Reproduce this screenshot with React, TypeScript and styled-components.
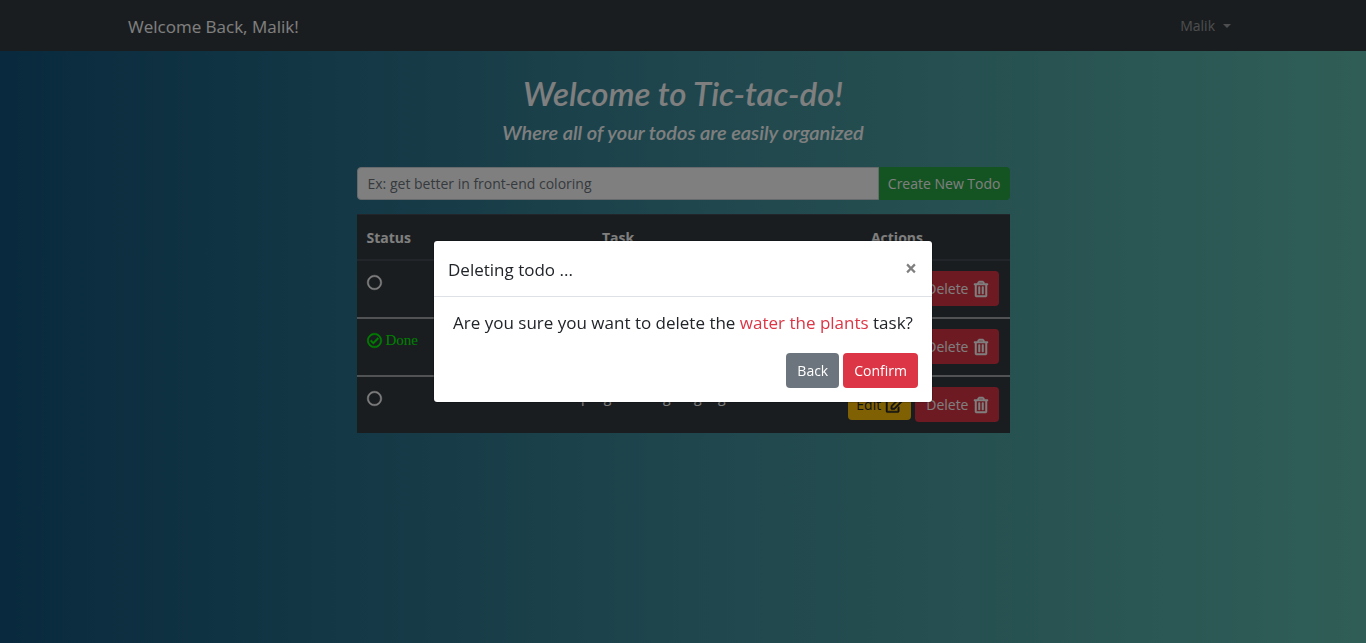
import React from "react";
import styled, { createGlobalStyle, css } from "styled-components";
import { FaRegCheckCircle, FaRegCircle, FaRegEdit, FaRegTrashAlt } from "react-icons/fa";

const GlobalStyle = createGlobalStyle`
  *, *::before, *::after { box-sizing: border-box; }
  body {
    margin: 0;
    min-height: 100vh;
    background: linear-gradient(to right, #12547c, #3e8c9a 50%, #60bdae);
    font-family: "Open Sans", "Noto Sans", sans-serif;
    font-size: 14px;
    line-height: 21px;
    color: #212529;
  }
`;

const Navbar = styled.header`
  height: 51px;
  background: #343a40;
`;

const NavInner = styled.div`
  max-width: 1140px;
  height: 100%;
  margin: 0 auto;
  padding: 0 15px;
  display: flex;
  align-items: center;
  justify-content: space-between;
`;

const Brand = styled.a`
  padding-top: 2px;
  color: #fff;
  font-size: 17px;
  line-height: 26px;
  text-decoration: none;
`;

const UserMenu = styled.button`
  display: flex;
  align-items: center;
  gap: 8px;
  padding: 7px;
  border: 0;
  background: none;
  color: rgba(255, 255, 255, 0.5);
  font: inherit;

  &::after {
    content: "";
    border: 4px solid transparent;
    border-top-color: currentColor;
    border-bottom: 0;
  }
`;

const Main = styled.main`
  max-width: 653px;
  margin: 0 auto;
  padding-top: 22px;
`;

const Heading = styled.h1`
  margin: 0 0 7px;
  color: #fff;
  font: italic 600 33px/40px Lato, sans-serif;
  text-align: center;
`;

const Tagline = styled.h2`
  margin: 0 0 22px;
  color: #fff;
  font: italic 600 20px/25px Lato, sans-serif;
  text-align: center;
`;

const TodoForm = styled.form`
  display: flex;
  height: 33px;
  margin-bottom: 14px;
`;

const TodoInput = styled.input`
  flex: 1;
  min-width: 0;
  padding: 0 10px;
  border: 1px solid #ced4da;
  border-radius: 4px 0 0 4px;
  background: #fff;
  font: inherit;

  &::placeholder { color: #6c757d; opacity: 1; }
`;

const tones = {
  success: css`background: #28a745; color: #fff;`,
  warning: css`background: #ffc107; color: #212529;`,
  danger: css`background: #dc3545; color: #fff;`,
  secondary: css`background: #6c757d; color: #fff;`,
};

const Button = styled.button<{ $tone: keyof typeof tones; $compact?: boolean }>`
  display: inline-flex;
  align-items: center;
  justify-content: center;
  gap: 5px;
  height: ${(p) => (p.$compact ? 31 : 35)}px;
  padding: 0 ${(p) => (p.$compact ? 8 : 11)}px;
  border: 0;
  border-radius: 4px;
  font: inherit;
  white-space: nowrap;
  ${(p) => tones[p.$tone]}
`;

const CreateButton = styled(Button)`
  height: 100%;
  padding: 0 9px;
  border-radius: 0 4px 4px 0;
`;

const boldIcon = css`
  overflow: visible;
  stroke: currentColor;
  stroke-width: 16px;
`;

const TrashIcon = styled(FaRegTrashAlt)`
  width: 14px;
  height: 16px;
  ${boldIcon}
`;

const EditIcon = styled(FaRegEdit)`
  width: 17px;
  height: 16px;
  ${boldIcon}
`;

const OpenIcon = styled(FaRegCircle)`
  width: 15px;
  height: 15px;
  ${boldIcon}
`;

const DoneIcon = styled(FaRegCheckCircle)`
  width: 15px;
  height: 15px;
  ${boldIcon}
`;

const TodoTable = styled.table`
  width: 100%;
  border-spacing: 0;
  background: #343a40;
  color: #fff;
`;

const HeadCell = styled.th<{ $align?: "left" | "center" }>`
  height: 47px;
  padding: 0 10px;
  border-top: 1px solid #454d55;
  border-bottom: 2px solid #454d55;
  text-align: ${(p) => p.$align ?? "center"};
  font-weight: 700;
`;

const Cell = styled.td<{ $align?: "left" | "center" }>`
  padding: 10px 11px 11px 10px;
  line-height: 19px;
  text-align: ${(p) => p.$align ?? "center"};
  vertical-align: top;
`;

const Row = styled.tr`
  & + & > ${Cell} { border-top: 2px solid #a2a4a6; }
`;

const Status = styled.span<{ $done?: boolean }>`
  display: flex;
  align-items: center;
  gap: 4px;
  height: 23px;
  color: ${(p) => (p.$done ? "#00ff00" : "#fff")};
  font-family: "Liberation Serif", serif;
  font-size: 15px;
`;

const Actions = styled.div`
  display: flex;
  align-items: center;
  justify-content: flex-end;
  gap: 4px;
`;

const Backdrop = styled.div`
  position: fixed;
  inset: 0;
  display: flex;
  align-items: center;
  justify-content: center;
  background: rgba(0, 0, 0, 0.5);
`;

const Dialog = styled.section`
  width: 100%;
  max-width: 500px;
  border: 1px solid rgba(0, 0, 0, 0.2);
  border-radius: 4px;
  background: #fff;
  background-clip: padding-box;
`;

const DialogHeader = styled.header`
  display: flex;
  align-items: center;
  justify-content: space-between;
  height: 56px;
  padding: 0 14px;
  border-bottom: 1px solid #dee2e6;
`;

const DialogTitle = styled.h2`
  margin: 0;
  padding-top: 2px;
  font-size: 17px;
  font-weight: 400;
  line-height: 26px;
`;

const CloseButton = styled.button`
  padding: 0 1px;
  border: 0;
  background: none;
  color: #7f7f7f;
  font: 700 21px/21px "Open Sans", sans-serif;
`;

const DialogBody = styled.div`
  padding: 14px;
`;

const Question = styled.p`
  margin: 0 0 18px;
  font-size: 17px;
  line-height: 24px;
  text-align: center;
`;

const TaskName = styled.span`
  color: #dc3545;
`;

const todos = [
  { task: "water the plants", done: false },
  { task: "finish the homework", done: true },
  { task: "learn a new programming language", done: false },
];

export default function App() {
  return (
    <>
      <GlobalStyle />
      <Navbar>
        <NavInner>
          <Brand href="#">Welcome Back, Malik!</Brand>
          <UserMenu type="button">Malik</UserMenu>
        </NavInner>
      </Navbar>
      <Main>
        <Heading>Welcome to Tic-tac-do!</Heading>
        <Tagline>Where all of your todos are easily organized</Tagline>
        <TodoForm>
          <TodoInput aria-label="New todo" placeholder="Ex: get better in front-end coloring" />
          <CreateButton type="button" $tone="success">Create New Todo</CreateButton>
        </TodoForm>
        <TodoTable>
          <thead>
            <tr>
              <HeadCell $align="left">Status</HeadCell>
              <HeadCell>Task</HeadCell>
              <HeadCell>Actions</HeadCell>
            </tr>
          </thead>
          <tbody>
            {todos.map(({ task, done }) => (
              <Row key={task}>
                <Cell $align="left">
                  <Status $done={done}>
                    {done ? <DoneIcon /> : <OpenIcon />}
                    {done && "Done"}
                  </Status>
                </Cell>
                <Cell>{task}</Cell>
                <Cell>
                  <Actions>
                    <Button type="button" $tone="warning" $compact>
                      Edit <EditIcon />
                    </Button>
                    <Button type="button" $tone="danger">
                      Delete <TrashIcon />
                    </Button>
                  </Actions>
                </Cell>
              </Row>
            ))}
          </tbody>
        </TodoTable>
      </Main>
      <Backdrop>
        <Dialog role="dialog" aria-modal="true" aria-labelledby="delete-title">
          <DialogHeader>
            <DialogTitle id="delete-title">Deleting todo ...</DialogTitle>
            <CloseButton type="button" aria-label="Close">×</CloseButton>
          </DialogHeader>
          <DialogBody>
            <Question>
              Are you sure you want to delete the <TaskName>water the plants</TaskName> task?
            </Question>
            <Actions>
              <Button type="button" $tone="secondary">Back</Button>
              <Button type="button" $tone="danger">Confirm</Button>
            </Actions>
          </DialogBody>
        </Dialog>
      </Backdrop>
    </>
  );
}
